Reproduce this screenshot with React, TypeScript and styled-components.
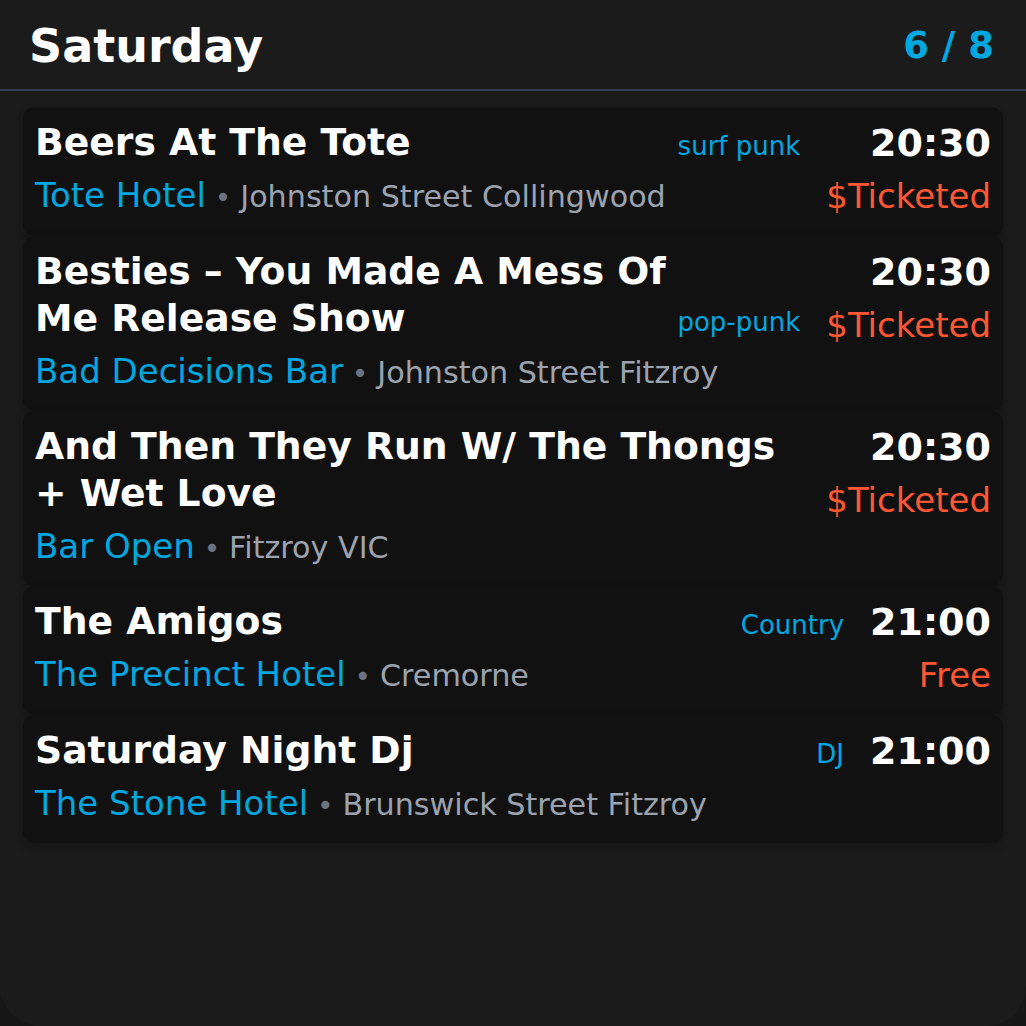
import React from "react";
import styled, { createGlobalStyle } from "styled-components";

const GlobalStyle = createGlobalStyle`
  html, body {
    margin: 0;
    padding: 0;
    background: #171717;
  }
  body {
    font-family: "DejaVu Sans", "Noto Sans", sans-serif;
  }
  * { box-sizing: border-box; }
`;

const Panel = styled.div`
  width: 1026px;
  min-height: 1026px;
  background: #1b1b1b;
  border-radius: 0 0 40px 40px;
  overflow: hidden;
`;

const Header = styled.header`
  display: flex;
  align-items: center;
  justify-content: space-between;
  padding: 19px 32px 15px 29px;
  border-bottom: 2px solid #374151;
`;

const DayTitle = styled.h1`
  margin: 0;
  font-size: 46px;
  line-height: 1.2;
  font-weight: 700;
  color: #ffffff;
`;

const Counter = styled.span`
  font-size: 37px;
  line-height: 1.2;
  font-weight: 700;
  color: #00a8e0;
`;

const List = styled.div`
  display: flex;
  flex-direction: column;
  padding: 16px 23px;
`;

const Card = styled.article`
  display: flex;
  gap: 26px;
  background: #111111;
  border-radius: 12px;
  padding: 12px 12px 19px;
  box-shadow: 0 4px 10px rgba(0, 0, 0, 0.25);
`;

const Main = styled.div`
  flex: 1;
  min-width: 0;
`;

const TitleRow = styled.div`
  display: flex;
  align-items: last baseline;
  gap: 6px;
`;

const Title = styled.h2`
  flex: 1;
  margin: 0;
  font-size: 37.7px;
  line-height: 47px;
  font-weight: 700;
  color: #ffffff;
`;

const Tag = styled.span`
  font-size: 26px;
  line-height: 1.3;
  color: #00a8e0;
  white-space: nowrap;
`;

const Venue = styled.div`
  margin-top: 8px;
  font-size: 34px;
  line-height: 42px;
  color: #00a8e0;
  white-space: nowrap;
`;

const Dot = styled.span`
  font-size: 28px;
  line-height: 1;
  color: #6b7280;
`;

const Address = styled.span`
  font-size: 30.2px;
  line-height: 1;
  color: #9ca3af;
`;

const Side = styled.div`
  display: flex;
  flex-direction: column;
  align-items: flex-end;
`;

const Time = styled.div`
  font-size: 38px;
  line-height: 49px;
  font-weight: 700;
  color: #ffffff;
`;

const Price = styled.div`
  margin-top: 7px;
  font-size: 34px;
  line-height: 42px;
  color: #ff5733;
  white-space: nowrap;
`;

type Gig = {
  title: string;
  tag?: string;
  venue: string;
  address: string;
  time: string;
  price?: string;
};

const gigs: Gig[] = [
  {
    title: "Beers At The Tote",
    tag: "surf punk",
    venue: "Tote Hotel",
    address: "Johnston Street Collingwood",
    time: "20:30",
    price: "$Ticketed",
  },
  {
    title: "Besties – You Made A Mess Of Me Release Show",
    tag: "pop-punk",
    venue: "Bad Decisions Bar",
    address: "Johnston Street Fitzroy",
    time: "20:30",
    price: "$Ticketed",
  },
  {
    title: "And Then They Run W/ The Thongs + Wet Love",
    venue: "Bar Open",
    address: "Fitzroy VIC",
    time: "20:30",
    price: "$Ticketed",
  },
  {
    title: "The Amigos",
    tag: "Country",
    venue: "The Precinct Hotel",
    address: "Cremorne",
    time: "21:00",
    price: "Free",
  },
  {
    title: "Saturday Night Dj",
    tag: "DJ",
    venue: "The Stone Hotel",
    address: "Brunswick Street Fitzroy",
    time: "21:00",
  },
];

export default function App() {
  return (
    <>
      <GlobalStyle />
      <Panel>
        <Header>
          <DayTitle>Saturday</DayTitle>
          <Counter>6 / 8</Counter>
        </Header>
        <List>
          {gigs.map((g) => (
            <Card key={g.title}>
              <Main>
                <TitleRow>
                  <Title>{g.title}</Title>
                  {g.tag && <Tag>{g.tag}</Tag>}
                </TitleRow>
                <Venue>
                  {g.venue}
                  <Dot> • </Dot>
                  <Address>{g.address}</Address>
                </Venue>
              </Main>
              <Side>
                <Time>{g.time}</Time>
                {g.price && <Price>{g.price}</Price>}
              </Side>
            </Card>
          ))}
        </List>
      </Panel>
    </>
  );
}
